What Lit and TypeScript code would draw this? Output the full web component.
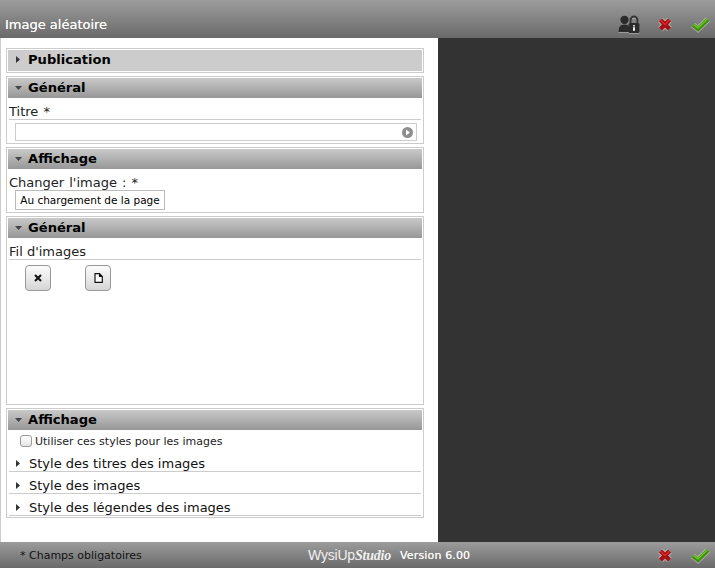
import { LitElement, html, css, svg } from "lit";
import { customElement } from "lit/decorators.js";

const cross = svg`<path d="M4.5 4 L13.5 13 M13.5 4 L4.5 13" fill="none" stroke="#e6e6e6" stroke-opacity=".45" stroke-width="6.5"/><path d="M4.5 4 L13.5 13 M13.5 4 L4.5 13" fill="none" stroke="#a80f14" stroke-width="4.4"/><path d="M4.5 4 L9 8.5 L13.5 4" fill="none" stroke="#d92a2a" stroke-width="1.4"/>`;
const check = svg`<path d="M3 9 L8 13 L18 3.4" fill="none" stroke="#e6e6e6" stroke-opacity=".45" stroke-width="6"/><path d="M3 9 L8 13 L18 3.4" fill="none" stroke="#3f8f0e" stroke-width="4"/><path d="M3.4 8.4 L8 11.8 L17.4 2.9" fill="none" stroke="#74c81e" stroke-width="1.3"/>`;

@customElement("app-root")
export class AppRoot extends LitElement {
  static styles = css`
    :host { display: block; width: 715px; height: 568px; font-family: "DejaVu Sans", Verdana, sans-serif; color: #111; overflow: hidden; }
    .page { display: flex; flex-direction: column; height: 568px; }
    .bar { display: flex; align-items: center; flex: none; background: linear-gradient(#9c9c9c, #6a6a6a); }
    .top { height: 38px; padding: 0 4px 0 5px; }
    .title { color: #f8f8f8; font-size: 13px; flex: 1; position: relative; top: 6px; line-height: 14px; text-shadow: 0 0 .6px #fff; }
    .icons { display: flex; align-items: center; }
    .top .icons { position: relative; top: 5px; }
    .main { flex: 1; display: flex; min-height: 0; background: #333; }
    .panel { width: 432px; background: #fff; border-left: 1px solid #ccc; padding: 10px 0 0 5px; display: flex; flex-direction: column; gap: 3px; }
    .box { width: 418px; box-sizing: border-box; border: 1px solid #ccc; padding: 1px; display: flex; flex-direction: column; }
    .head { height: 20px; box-sizing: border-box; padding-bottom: 1px; display: flex; align-items: center; background: linear-gradient(#c9c9c9, #979797); font-weight: bold; font-size: 13.1px; color: #000; flex: none; }
    .head.closed { background: #ccc; height: 21px; padding-bottom: 3px; }
    .head .tw { width: 20px; display: flex; justify-content: center; flex: none; }
    .tri { display: block; }
    .label { font-size: 13px; padding: 7px 0 1px; margin: 0 1px; color: #222; border-bottom: 1px solid #ccc; height: 13px; display: flex; align-items: center; }
    .label.plain { border-bottom: 0; height: 15px; padding: 6px 0 0; }
    .req-label { word-spacing: 1px; }
    .field { height: 16px; margin: 3px 5px 1px 7px; border: 1px solid #ccc; display: flex; align-items: center; justify-content: flex-end; padding-right: 3px; }
    .sel { align-self: flex-start; height: 18px; width: 148px; margin: 0 0 1px 7px; border: 1px solid #bbb; font-size: 10.5px; line-height: 18px; text-align: center; color: #000; }
    .gen2 { height: 189px; }
    .btns { display: flex; gap: 34px; padding: 5px 0 0 17px; }
    .btn { width: 24px; height: 24px; border: 1px solid #999; border-radius: 4px; background: linear-gradient(#fcfcfc, #d6d6d6); display: flex; align-items: center; justify-content: center; }
    .check { display: flex; align-items: center; height: 20px; box-sizing: border-box; padding: 2px 0 0 12px; font-size: 11px; color: #222; gap: 3px; }
    .cb { width: 10px; height: 10px; border: 1px solid #999; border-radius: 3px; background: linear-gradient(#fff, #e4e4e4); flex: none; }
    .row { display: flex; align-items: center; height: 22px; box-sizing: border-box; padding-top: 6px; border-bottom: 1px solid #ccc; font-size: 13px; color: #111; margin: 0 1px; }
    .row .tw { width: 20px; padding-left: 7px; box-sizing: border-box; flex: none; display: flex; }
    .foot { height: 26px; padding: 0 4px 0 20px; font-size: 11px; color: #111; }
    .req { width: 288px; flex: none; }
    .logo { color: #f0f0f0; font-size: 14px; font-family: "Liberation Sans", sans-serif; width: 92px; flex: none; letter-spacing: -0.2px; }
    .logo i { font-family: "Liberation Serif", serif; font-weight: bold; font-size: 14px; letter-spacing: -0.2px; }
    .ver { color: #f8f8f8; font-size: 11px; flex: 1; letter-spacing: .15px; text-shadow: 0 0 .6px #fff; }
    .lock { margin-right: 16px; filter: drop-shadow(0 1px 0 rgba(255,255,255,.3)); }
    .x { margin-right: 16px; }
  `;

  private triRight() {
    return html`<svg class="tri" width="4" height="7" viewBox="0 0 4 7"><path d="M0 0 L4 3.5 L0 7 Z" fill="#333"/></svg>`;
  }
  private triDown() {
    return html`<svg class="tri" width="7" height="4" viewBox="0 0 7 4"><path d="M0 0 H7 L3.5 4 Z" fill="#444"/></svg>`;
  }
  private head(t: string, closed = false) {
    return html`<div class="head ${closed ? "closed" : ""}"><span class="tw">${closed ? this.triRight() : this.triDown()}</span>${t}</div>`;
  }
  private marks() {
    return html`<svg class="x" width="18" height="17" viewBox="0 0 18 17">${cross}</svg><svg width="21" height="17" viewBox="0 0 21 17">${check}</svg>`;
  }

  render() {
    return html`<div class="page">
      <div class="bar top">
        <div class="title">Image aléatoire</div>
        <div class="icons">
          <svg class="lock" width="22" height="19" viewBox="0 0 22 19">
            <circle cx="6.5" cy="5" r="4.2" fill="#2b2b2b"/>
            <path d="M0.5 17 C0.5 11 3 9.5 6.5 9.5 C10 9.5 12 11 12 17 Z" fill="#2b2b2b"/>
            <path d="M12.6 8 V5 A3.4 3.4 0 0 1 19.4 5 V8" fill="none" stroke="#333" stroke-width="2"/>
            <rect x="10.5" y="8" width="11" height="10" rx="1.5" fill="#2b2b2b"/>
            <rect x="15.2" y="10" width="1.6" height="1.6" fill="#eee"/><rect x="15" y="12.2" width="2" height="3.6" fill="#eee"/>
          </svg>
          ${this.marks()}
        </div>
      </div>
      <div class="main">
        <div class="panel">
          <div class="box">${this.head("Publication", true)}</div>
          <div class="box">
            ${this.head("Général")}
            <div class="label req-label">Titre *</div>
            <div class="field"><svg width="11" height="11" viewBox="0 0 11 11"><circle cx="5.5" cy="5.5" r="5.5" fill="#8e8e8e"/><path d="M4 2.6 L8 5.5 L4 8.4 Z" fill="#fff"/></svg></div>
          </div>
          <div class="box">
            ${this.head("Affichage")}
            <div class="label plain req-label">Changer l'image : *</div>
            <div class="sel">Au chargement de la page</div>
          </div>
          <div class="box gen2">
            ${this.head("Général")}
            <div class="label">Fil d'images</div>
            <div class="btns">
              <div class="btn"><svg width="8" height="8" viewBox="0 0 8 8"><path d="M1 1 L7 7 M7 1 L1 7" stroke="#111" stroke-width="2"/></svg></div>
              <div class="btn"><svg width="9" height="10" viewBox="0 0 9 10"><path d="M1 .7 H5.5 L8.3 3.5 V9.3 H1 Z M5.5 .7 V3.5 H8.3" fill="#fff" stroke="#111" stroke-width="1.2"/></svg></div>
            </div>
          </div>
          <div class="box">
            ${this.head("Affichage")}
            <div class="check"><span class="cb"></span><span>Utiliser ces styles pour les images</span></div>
            <div class="row"><span class="tw">${this.triRight()}</span>Style des titres des images</div>
            <div class="row"><span class="tw">${this.triRight()}</span>Style des images</div>
            <div class="row"><span class="tw">${this.triRight()}</span>Style des légendes des images</div>
          </div>
        </div>
      </div>
      <div class="bar foot">
        <div class="req">* Champs obligatoires</div>
        <div class="logo">WysiUp<i>Studio</i></div>
        <div class="ver">Version 6.00</div>
        <div class="icons">${this.marks()}</div>
      </div>
    </div>`;
  }
}
